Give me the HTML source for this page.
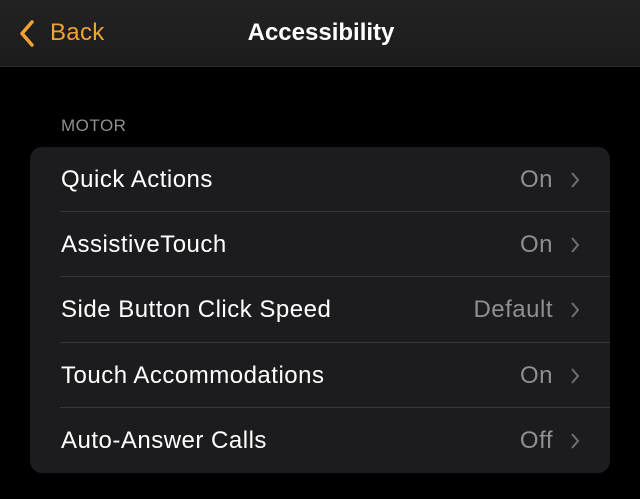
<!DOCTYPE html>
<html><head><style>
body{margin:0;width:640px;height:499px;background:#000;font-family:"Liberation Sans",sans-serif;overflow:hidden;position:relative}
.hdr{position:absolute;left:0;top:0;width:640px;height:66px;background:linear-gradient(#222 0%,#1c1c1c 100%);border-bottom:1px solid #2a2a2a}
.back{position:absolute;left:50px;top:19px;color:#f0a233;font-size:24px;letter-spacing:0.3px}
.title{position:absolute;left:0;width:640px;text-align:center;top:19px;color:#fff;font-size:24px;font-weight:bold;padding-left:1px}
.sec{position:absolute;left:61px;top:116px;color:#8e8e93;font-size:17px;letter-spacing:0.5px}
.card{position:absolute;left:30px;top:147px;width:580px;height:326px;background:#1c1c1e;border-radius:12px;overflow:hidden}
.row{position:relative;height:65.2px}
.row .l{position:absolute;left:31px;top:19px;color:#fff;font-size:24px;letter-spacing:0.5px}
.row .r{position:absolute;right:57px;top:19px;color:#8e8e93;font-size:24px;letter-spacing:0.5px}
.row svg{position:absolute;right:30px;top:24px}
.sep{position:absolute;left:30px;right:0;bottom:0;height:1px;background:#38383a}
</style></head><body>
<div class="hdr">
<svg style="position:absolute;left:17px;top:19px" width="22" height="30" viewBox="0 0 22 30"><path d="M15 3 L5 14.5 L15 26" stroke="#f0a233" stroke-width="3.5" fill="none" stroke-linecap="round" stroke-linejoin="round"/></svg>
<div class="back">Back</div>
<div class="title">Accessibility</div>
</div>
<div class="sec">MOTOR</div>
<div class="card">
<div class="row"><span class="l">Quick Actions</span><span class="r">On</span><svg width="10" height="18" viewBox="0 0 10 18"><path d="M2 2 L8 9 L2 16" stroke="#6e6e73" stroke-width="2" fill="none"/></svg><div class="sep"></div></div>
<div class="row"><span class="l">AssistiveTouch</span><span class="r">On</span><svg width="10" height="18" viewBox="0 0 10 18"><path d="M2 2 L8 9 L2 16" stroke="#6e6e73" stroke-width="2" fill="none"/></svg><div class="sep"></div></div>
<div class="row"><span class="l">Side Button Click Speed</span><span class="r">Default</span><svg width="10" height="18" viewBox="0 0 10 18"><path d="M2 2 L8 9 L2 16" stroke="#6e6e73" stroke-width="2" fill="none"/></svg><div class="sep"></div></div>
<div class="row"><span class="l">Touch Accommodations</span><span class="r">On</span><svg width="10" height="18" viewBox="0 0 10 18"><path d="M2 2 L8 9 L2 16" stroke="#6e6e73" stroke-width="2" fill="none"/></svg><div class="sep"></div></div>
<div class="row"><span class="l">Auto-Answer Calls</span><span class="r">Off</span><svg width="10" height="18" viewBox="0 0 10 18"><path d="M2 2 L8 9 L2 16" stroke="#6e6e73" stroke-width="2" fill="none"/></svg></div>
</div>
</body></html>
